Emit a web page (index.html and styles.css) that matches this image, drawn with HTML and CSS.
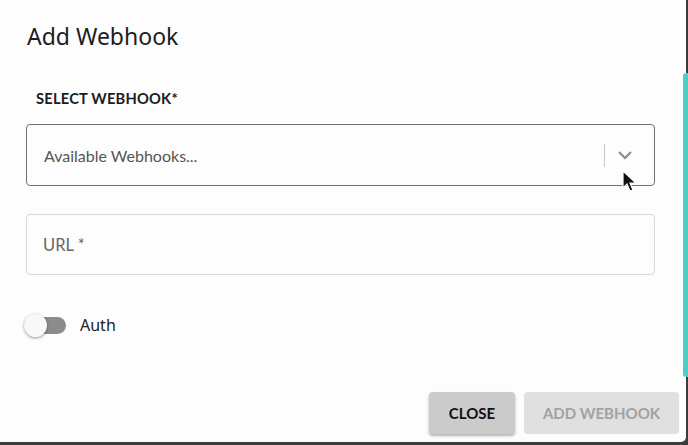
FILE: index.html
```html
<!DOCTYPE html>
<html lang="en">
<head>
    <meta charset="UTF-8">
    <title>Add Webhook</title>
    <link rel="stylesheet" href="styles.css">
</head>
<body>
    <div class="dialog">
        <h2 class="title">Add Webhook</h2>
        <div class="content">
            <label class="field-label">SELECT WEBHOOK*</label>
            <div class="select">
                <span class="placeholder">Available Webhooks...</span>
                <span class="divider"></span>
                <svg class="chevron" width="16" height="10" viewBox="0 0 16 10">
                    <path d="M2 2 L8 8 L14 2" fill="none" stroke="#888" stroke-width="2"/>
                </svg>
            </div>
            <div class="input">
                <span class="placeholder url">URL *</span>
            </div>
            <div class="toggle-row">
                <span class="toggle"><span class="knob"></span></span>
                <span class="toggle-label">Auth</span>
            </div>
        </div>
        <div class="actions">
            <button class="btn btn-close">CLOSE</button>
            <button class="btn btn-add" disabled>ADD WEBHOOK</button>
        </div>
        <div class="scroll-thumb"></div>
        <svg class="cursor" width="16" height="24" viewBox="0 0 16 24">
            <path d="M1 1 L1 18 L5 14 L8 21 L11 20 L8 13 L14 13 Z" fill="#111" stroke="#fff" stroke-width="1.2"/>
        </svg>
    </div>
</body>
</html>
```

FILE: styles.css
```css
html, body {
    margin: 0;
    height: 100%;
}
body {
    background: #3c3c3c;
    font-family: 'Noto Sans', 'Open Sans', sans-serif;
    overflow: hidden;
}
.dialog {
    position: relative;
    width: 686px;
    height: 442px;
    background: #fdfdfd;
    border-radius: 0 0 5px 0;
    box-sizing: border-box;
    display: flex;
    flex-direction: column;
}
.title {
    margin: 0;
    padding: 21px 0 0 27px;
    font-size: 23px;
    font-weight: 400;
    color: #1c1c1c;
    line-height: 30px;
}
.content {
    padding: 38px 31px 0 26px;
    display: flex;
    flex-direction: column;
}
.field-label {
    font-family: 'Lato', 'Noto Sans', sans-serif;
    font-weight: 700;
    font-size: 14.7px;
    color: #1c1c1c;
    padding-left: 10px;
    letter-spacing: 0.2px;
    line-height: 18px;
}
.select {
    margin-top: 17px;
    height: 62px;
    border: 1px solid #707070;
    border-radius: 4px;
    box-sizing: border-box;
    display: flex;
    align-items: center;
    padding: 0 21px 0 17px;
}
.placeholder {
    flex: 1;
    font-family: 'Lato', 'Noto Sans', sans-serif;
    font-size: 16px;
    color: #555;
}
.divider {
    width: 1px;
    height: 23px;
    background: #c8c8c8;
    margin-right: 12px;
}
.chevron {
    display: block;
}
.input {
    margin-top: 28px;
    height: 61px;
    border: 1px solid #d8d8d8;
    border-radius: 4px;
    box-sizing: border-box;
    display: flex;
    align-items: center;
    padding: 0 16px;
}
.url {
    font-size: 16.5px;
    color: #666;
}
.toggle-row {
    margin-top: 38px;
    display: flex;
    align-items: center;
    gap: 14px;
    height: 24px;
}
.toggle {
    position: relative;
    width: 40px;
    height: 17px;
    border-radius: 9px;
    background: #8c8c8c;
}
.knob {
    position: absolute;
    left: -2px;
    top: -3px;
    width: 23px;
    height: 23px;
    border-radius: 50%;
    background: #f8f8f8;
    box-shadow: 0 1px 3px rgba(0, 0, 0, 0.4);
}
.toggle-label {
    font-size: 16px;
    color: #222;
}
.actions {
    margin-top: auto;
    padding: 0 7px 8px 0;
    display: flex;
    justify-content: flex-end;
    gap: 9px;
}
.btn {
    height: 42px;
    border: none;
    border-radius: 4px;
    font-family: 'Lato', 'Noto Sans', sans-serif;
    font-weight: 700;
    font-size: 15px;
    padding: 0 18px;
}
.btn-close {
    width: 86px;
    background: #cbcbcb;
    color: #111;
    box-shadow: 0 2px 3px rgba(0, 0, 0, 0.3);
}
.btn-add {
    width: 155px;
    background: #e0e0e0;
    color: #a2a2a2;
}
.scroll-thumb {
    position: absolute;
    right: -2px;
    top: 73px;
    width: 5px;
    height: 304px;
    background: #4ecfc6;
    border-radius: 3px 0 0 3px;
}
.cursor {
    position: absolute;
    left: 622px;
    top: 170px;
}
```
